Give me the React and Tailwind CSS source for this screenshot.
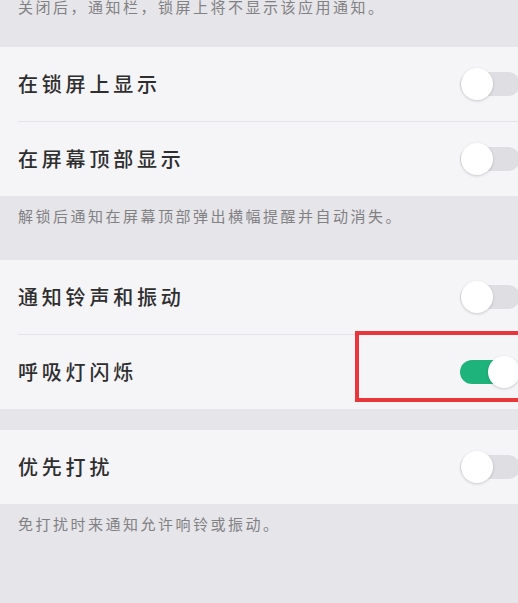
import React, { useState } from 'react';

const Toggle = ({ on, onChange }) => (
    <button
        onClick={onChange}
        className={`relative h-[24px] w-[60px] shrink-0 rounded-full mr-[-2px] ${on ? 'bg-[#1eb37b]' : 'bg-[#dfdee2]'}`}
    >
        <span
            className={`absolute top-1/2 -translate-y-1/2 h-[32px] w-[32px] rounded-full bg-white shadow-[0_1px_3px_rgba(0,0,0,0.18)] ${on ? 'left-[28px]' : 'left-[1px]'}`}
        />
    </button>
);

const Row = ({ label, on, onToggle, divider, children }) => (
    <div className="relative">
        <div className="flex h-[74px] items-center justify-between pl-[18px]">
            <span className="text-[20px] font-medium tracking-[3.8px] text-[#2e2e2e]">{label}</span>
            <Toggle on={on} onChange={onToggle} />
        </div>
        {divider && <div className="ml-[18px] h-px bg-[#e4e3e7]" />}
        {children}
    </div>
);

const Caption = ({ text, className }) => (
    <div className={`bg-[#e6e5e9] px-[18px] text-[15px] leading-[20px] tracking-[2.5px] text-[#818184] ${className}`}>
        {text}
    </div>
);

export default function App() {
    const [state, setState] = useState({
        lock: false,
        top: false,
        sound: false,
        breath: true,
        priority: false,
    });
    const flip = key => setState(prev => ({ ...prev, [key]: !prev[key] }));

    return (
        <div
            className="flex h-[603px] w-[518px] flex-col overflow-hidden bg-[#e6e5e9]"
            style={{ fontFamily: '"Noto Sans CJK SC", "Noto Sans", sans-serif' }}
        >
            <Caption className="-mt-[3px] pb-[30px]" text="关闭后，通知栏，锁屏上将不显示该应用通知。" />

            <div className="bg-[#f5f4f7]">
                <Row label="在锁屏上显示" on={state.lock} onToggle={() => flip('lock')} divider />
                <Row label="在屏幕顶部显示" on={state.top} onToggle={() => flip('top')} />
            </div>

            <Caption className="pt-[10px] pb-[34px]" text="解锁后通知在屏幕顶部弹出横幅提醒并自动消失。" />

            <div className="bg-[#f5f4f7]">
                <Row label="通知铃声和振动" on={state.sound} onToggle={() => flip('sound')} divider />
                <Row label="呼吸灯闪烁" on={state.breath} onToggle={() => flip('breath')}>
                    <div className="pointer-events-none absolute left-[355px] right-[-10px] top-[-4px] h-[71px] border-[4px] border-[#e8363c]" />
                </Row>
            </div>

            <div className="h-[21px]" />

            <div className="bg-[#f5f4f7]">
                <Row label="优先打扰" on={state.priority} onToggle={() => flip('priority')} />
            </div>

            <Caption className="pt-[10px]" text="免打扰时来通知允许响铃或振动。" />
        </div>
    );
}
